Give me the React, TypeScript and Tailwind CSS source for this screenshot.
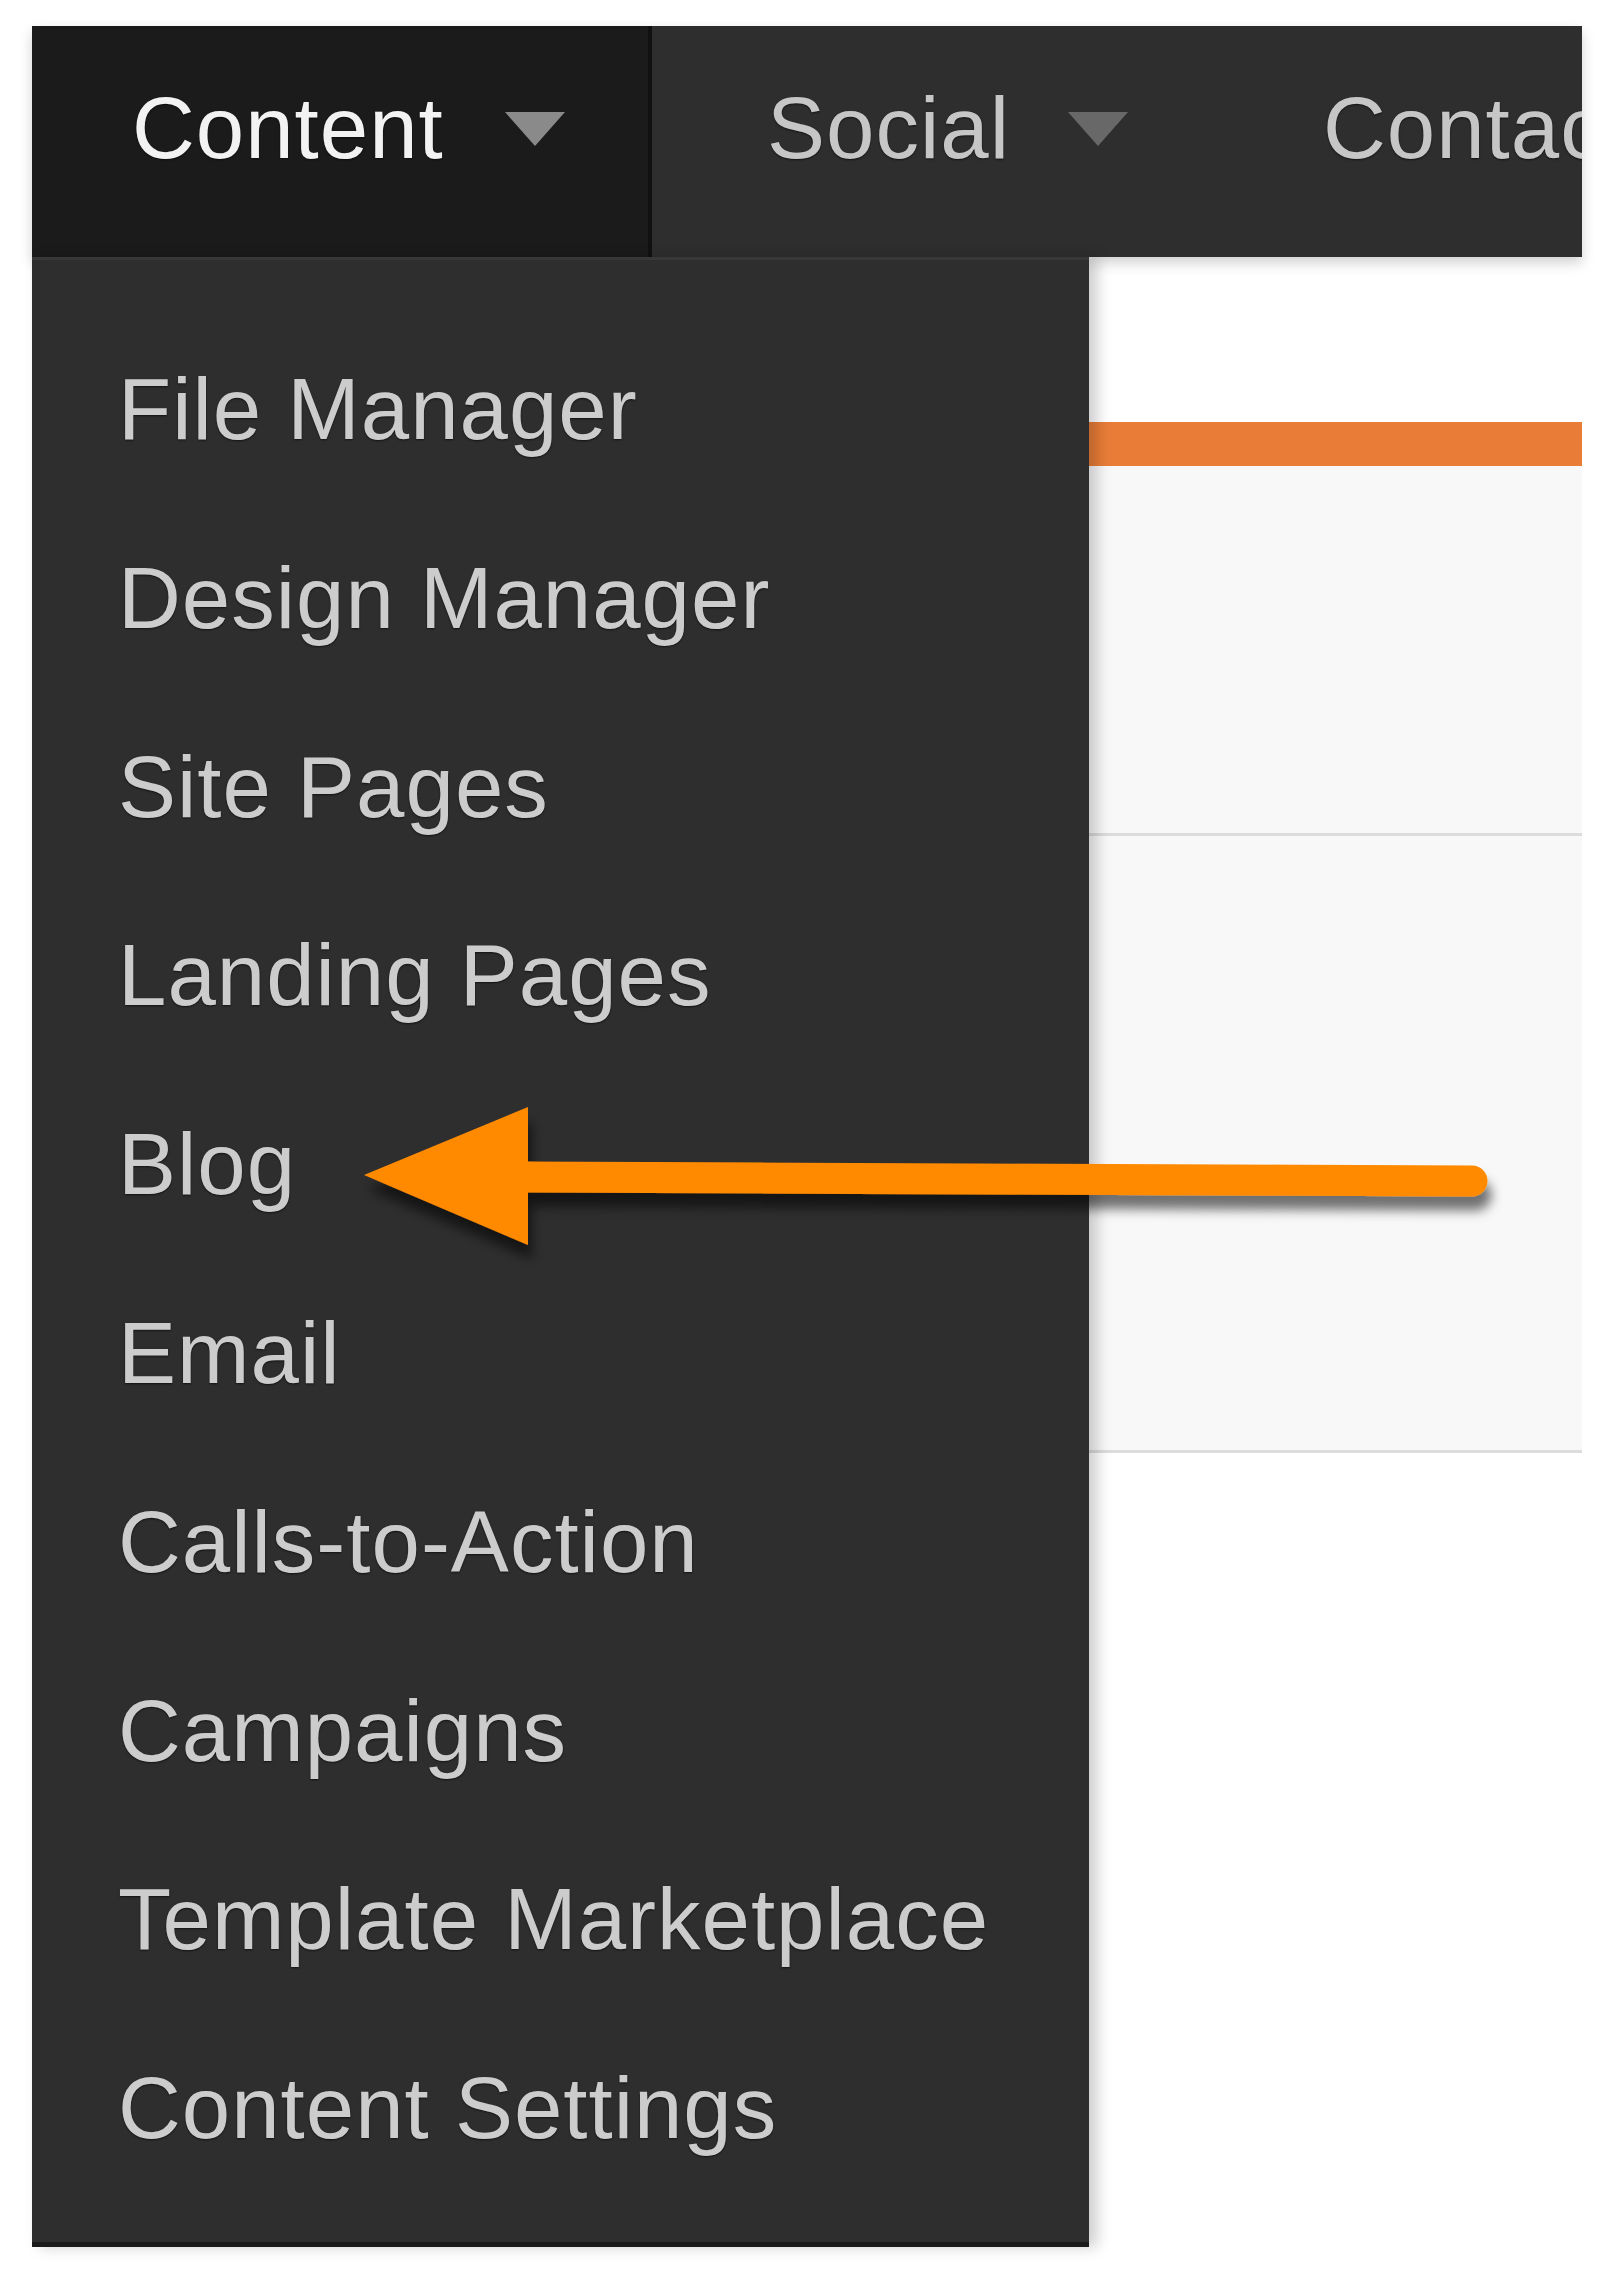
const menuItems = [
  "File Manager",
  "Design Manager",
  "Site Pages",
  "Landing Pages",
  "Blog",
  "Email",
  "Calls-to-Action",
  "Campaigns",
  "Template Marketplace",
  "Content Settings",
];

function Caret({ color, gap }: { color: string; gap: string }) {
  return (
    <span
      className={`mt-[28px] h-0 w-0 shrink-0 border-x-[30px] border-t-[34px] border-x-transparent ${gap} ${color}`}
    />
  );
}

function Arrow() {
  return (
    <svg
      className="pointer-events-none absolute left-[340px] top-[1090px] z-30"
      width="1180"
      height="200"
      viewBox="0 0 1180 200"
    >
      <defs>
        <filter id="arrowShadow" x="-10%" y="-50%" width="120%" height="200%">
          <feDropShadow dx="4" dy="14" stdDeviation="6" floodColor="#000" floodOpacity="0.55" />
        </filter>
      </defs>
      <g filter="url(#arrowShadow)" fill="#ff8a00">
        <line x1="180" y1="87" x2="1132" y2="91" stroke="#ff8a00" strokeWidth="31" strokeLinecap="round" />
        <polygon points="24,85 188,17 188,155" />
      </g>
    </svg>
  );
}

export default function App() {
  return (
    <div className="relative h-[2274px] w-[1600px] overflow-hidden bg-white font-['Liberation_Sans',Arial,sans-serif] text-[87px] tracking-[1px] [text-shadow:0_1px_2px_rgba(0,0,0,0.6)]">
      <div className="w-[1582px] pl-[32px] pt-[26px]">
        {/* top navigation */}
        <nav className="relative z-10 flex h-[231px] items-start overflow-hidden bg-[#2e2e2e] shadow-[0_6px_12px_rgba(0,0,0,0.18)]">
          <div className="flex h-full w-[620px] shrink-0 items-start border-r-4 border-[#111111] bg-[#1b1b1b] pl-[100px] pt-[58px]">
            <span className="w-[320px] shrink-0 leading-none text-[#f2f2f2]">Content</span>
            <Caret gap="ml-[53px]" color="border-t-[#8a8a8a]" />
          </div>
          <div className="flex h-full shrink-0 items-start pl-[115px] pt-[58px]">
            <span className="w-[243px] shrink-0 leading-none text-[#c6c6c6]">Social</span>
            <Caret gap="ml-[58px]" color="border-t-[#686868]" />
            <span className="ml-[195px] shrink-0 leading-none text-[#c6c6c6]">Contacts</span>
          </div>
        </nav>

        {/* page behind the menu */}
        <div className="h-[165px] bg-white" />
        <div className="h-[44px] bg-[#e97d37]" />
        <div className="h-[370px] border-b-[3px] border-[#dcdcdc] bg-[#f8f8f8]" />
        <div className="h-[617px] border-b-[3px] border-[#dcdcdc] bg-[#f8f8f8]" />
      </div>

      {/* dropdown menu */}
      <div className="absolute left-[32px] top-[257px] z-20 h-[1990px] w-[1057px] border-t-[3px] border-b-[5px] border-[#383838] border-b-[#1a1a1a] bg-[#2e2e2e] pl-[86px] pt-[55px] shadow-[8px_0_14px_rgba(0,0,0,0.2)]">
        <ul>
          {menuItems.map((item) => (
            <li key={item} className="h-[188.8px] whitespace-nowrap leading-[188.8px] text-[#cccccc]">
              {item}
            </li>
          ))}
        </ul>
      </div>

      <Arrow />
    </div>
  );
}
